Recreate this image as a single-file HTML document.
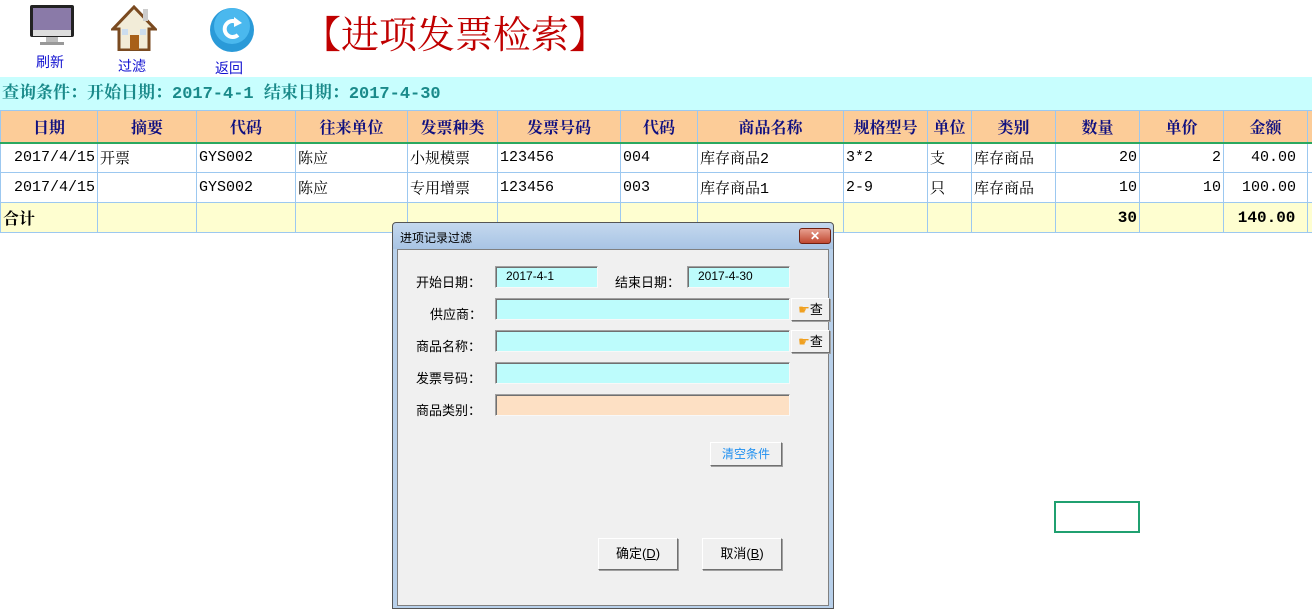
<!DOCTYPE html>
<html><head><meta charset="utf-8"><style>
*{margin:0;padding:0;box-sizing:border-box}
body{width:1312px;height:611px;background:#fff;position:relative;overflow:hidden;font-family:"Liberation Serif","Noto Serif CJK SC",serif}
.a{position:absolute}
.tb{font-family:"Liberation Sans","Noto Sans CJK SC",sans-serif;color:#1010d0;font-size:14px}
table{position:absolute;left:0;top:110px;width:1312px;border-collapse:collapse;table-layout:fixed}
td{border:1px solid #9cc8f0;font-size:15px;height:30px;padding:0 2px;white-space:nowrap;overflow:hidden;color:#000;font-family:"Liberation Mono","Noto Serif CJK SC",serif}
tr.h td{background:#fccc98;color:#101080;font-weight:bold;text-align:center;height:32px;border-bottom:2px solid #2aa860;font-size:16px}
tr.t td{background:#fefed0;font-weight:bold;font-size:16px}
.r{text-align:right}
.dl{font-family:"Liberation Sans","Noto Sans CJK SC",sans-serif;font-size:13px;color:#000}
.in{position:absolute;height:22px;border:1px solid #a0a0a0;border-right-color:#f8f8f8;border-bottom-color:#f8f8f8;box-shadow:inset 1px 1px 0 #707070;background:#bdfcfc;font-size:12px;padding:2px 10px;font-family:"Liberation Sans",sans-serif}
.btn{position:absolute;background:#f0f0f0;border:1px solid #fff;border-right-color:#707070;border-bottom-color:#707070;box-shadow:1px 1px 0 #a0a0a0;text-align:center}
</style></head><body>
<svg class="a" style="left:28px;top:3px" width="48" height="44"><rect x="2" y="2" width="44" height="32" rx="2" fill="#222"/><rect x="5" y="5" width="38" height="22" fill="#8a7aa8"/><rect x="5" y="27" width="38" height="6" fill="#ddd"/><rect x="18" y="34" width="12" height="6" fill="#bbb"/><rect x="12" y="39" width="24" height="3" fill="#999"/></svg>
<div class="a tb" style="left:36px;top:52px">刷新</div>
<svg class="a" style="left:111px;top:5px" width="46" height="46"><polygon points="23,2 2,24 8,24 8,45 38,45 38,24 44,24" fill="#f2ecd8" stroke="#7a4a20" stroke-width="3"/><rect x="19" y="30" width="9" height="15" fill="#a86018"/><rect x="11" y="24" width="6" height="6" fill="#cde"/><rect x="29" y="24" width="6" height="6" fill="#cde"/><rect x="32" y="4" width="5" height="12" fill="#ccc"/></svg>
<div class="a tb" style="left:118px;top:56px">过滤</div>
<svg class="a" style="left:208px;top:6px" width="48" height="48"><circle cx="24" cy="24" r="22" fill="#2a9ad8"/><circle cx="24" cy="20" r="18" fill="#4ab8ee"/><path d="M30 17a8 8 0 1 0 0 12" stroke="#fff" stroke-width="4" fill="none"/><polygon points="26,11 34,17 26,21" fill="#fff"/></svg>
<div class="a tb" style="left:215px;top:58px">返回</div>
<div class="a" style="left:303px;top:12px;font-size:38px;color:#c00000;line-height:48px">【进项发票检索】</div>
<div class="a" style="left:0;top:77px;width:1312px;height:33px;background:#c8fefe;color:#1a8a8a;font-weight:bold;font-size:17px;line-height:36px;padding-left:2px;font-family:'Liberation Mono','Noto Serif CJK SC',serif">查询条件：开始日期：2017-4-1 结束日期：2017-4-30</div>
<table>
<colgroup><col style="width:97px"><col style="width:99px"><col style="width:99px"><col style="width:112px"><col style="width:90px"><col style="width:123px"><col style="width:77px"><col style="width:146px"><col style="width:84px"><col style="width:44px"><col style="width:84px"><col style="width:84px"><col style="width:84px"><col style="width:84px"><col style="width:5px"></colgroup>
<tr class="h"><td>日期</td><td>摘要</td><td>代码</td><td>往来单位</td><td>发票种类</td><td>发票号码</td><td>代码</td><td>商品名称</td><td>规格型号</td><td>单位</td><td>类别</td><td>数量</td><td>单价</td><td>金额</td><td></td></tr>
<tr><td class="r">2017/4/15</td><td>开票</td><td>GYS002</td><td>陈应</td><td>小规模票</td><td>123456</td><td>004</td><td>库存商品2</td><td>3*2</td><td>支</td><td>库存商品</td><td class="r">20</td><td class="r">2</td><td class="r">40.00&nbsp;</td><td></td></tr>
<tr><td class="r">2017/4/15</td><td></td><td>GYS002</td><td>陈应</td><td>专用增票</td><td>123456</td><td>003</td><td>库存商品1</td><td>2-9</td><td>只</td><td>库存商品</td><td class="r">10</td><td class="r">10</td><td class="r">100.00&nbsp;</td><td></td></tr>
<tr class="t"><td>合计</td><td></td><td></td><td></td><td></td><td></td><td></td><td></td><td></td><td></td><td></td><td class="r">30</td><td></td><td class="r">140.00&nbsp;</td><td></td></tr>
</table>
<div class="a" style="left:1054px;top:501px;width:86px;height:32px;border:2px solid #20a070"></div>
<div class="a" style="left:392px;top:222px;width:442px;height:387px;background:linear-gradient(#c4d8ee,#a8c4e4 26px,#b8d0ea 26px);border:1px solid #555;border-radius:4px 4px 0 0">
 <div class="a dl" style="left:7px;top:6px;font-size:12px">进项记录过滤</div>
 <div class="a" style="left:406px;top:5px;width:32px;height:16px;background:linear-gradient(#e8a090,#c04830);border:1px solid #702010;border-radius:3px;color:#fff;font-size:12px;text-align:center;line-height:14px;font-weight:bold">✕</div>
 <div class="a" style="left:4px;top:26px;width:432px;height:357px;background:#f0f0f0;border:1px solid #808080">
  <div class="a dl" style="left:18px;top:22px">开始日期：</div>
  <div class="in" style="left:97px;top:16px;width:103px">2017-4-1</div>
  <div class="a dl" style="left:217px;top:22px">结束日期：</div>
  <div class="in" style="left:289px;top:16px;width:103px">2017-4-30</div>
  <div class="a dl" style="left:32px;top:54px">供应商：</div>
  <div class="in" style="left:97px;top:48px;width:295px"></div>
  <div class="btn dl" style="left:393px;top:48px;width:39px;height:23px;line-height:21px"><span style="color:#f0a020">☛</span>查</div>
  <div class="a dl" style="left:18px;top:86px">商品名称：</div>
  <div class="in" style="left:97px;top:80px;width:295px"></div>
  <div class="btn dl" style="left:393px;top:80px;width:39px;height:23px;line-height:21px"><span style="color:#f0a020">☛</span>查</div>
  <div class="a dl" style="left:18px;top:118px">发票号码：</div>
  <div class="in" style="left:97px;top:112px;width:295px"></div>
  <div class="a dl" style="left:18px;top:150px">商品类别：</div>
  <div class="in" style="left:97px;top:144px;width:295px;background:#fde0c4"></div>
  <div class="btn dl" style="left:312px;top:192px;width:72px;height:24px;line-height:22px;color:#2090f0;font-size:12px">清空条件</div>
  <div class="btn dl" style="left:200px;top:288px;width:80px;height:32px;line-height:30px">确定(<u>D</u>)</div>
  <div class="btn dl" style="left:304px;top:288px;width:80px;height:32px;line-height:30px">取消(<u>B</u>)</div>
 </div>
</div>
</body></html>
